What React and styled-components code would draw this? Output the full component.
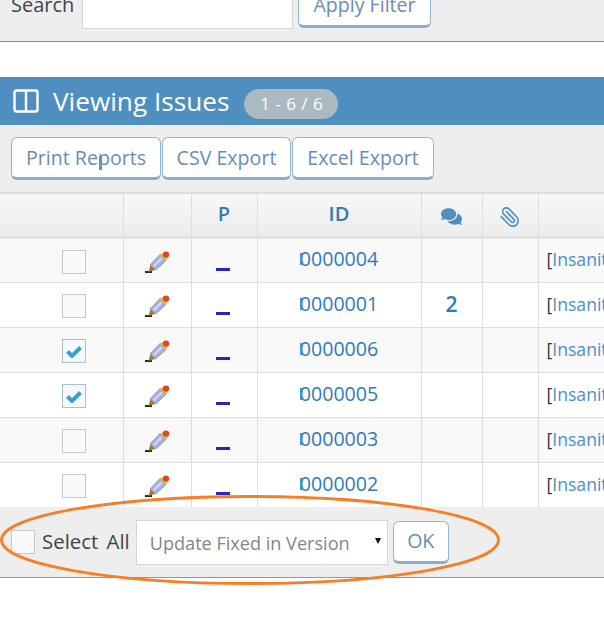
import React from 'react';
import styled, { createGlobalStyle } from 'styled-components';
import { FaComments } from 'react-icons/fa';
import { Paperclip } from 'lucide-react';

const Global = createGlobalStyle`
  html, body { margin: 0; padding: 0; background: #fff; overflow: hidden; }
  body { font-family: "Open Sans", "Liberation Sans", sans-serif; font-size: 19.6px; color: #393939; }
`;
const Page = styled.div`position: relative; width: 604px; height: 625px; overflow: hidden;`;
const FilterBar = styled.div`
  height: 41px; box-sizing: content-box; background: #eee; border-bottom: 1px solid #6f97b8;
  display: flex; align-items: flex-end; padding-left: 11px; overflow: hidden;
`;
const FilterLabel = styled.span`font-size: 20px; line-height: 28px; margin-bottom: 22px; width: 71px; flex: none; color: #444;`;
const SearchInput = styled.div`
  width: 211px; height: 44px; box-sizing: border-box; background: #fff; border: 1px solid #d5d5d5;
  margin-bottom: 12px; flex: none;
`;
const Button = styled.button`
  font-family: inherit; font-size: 19.6px; line-height: 28px; color: #6a8db0; background: #fff;
  border: 1px solid #94b6d4; border-bottom-width: 3px; border-bottom-color: #8aacce; border-radius: 6px;
  padding: 0; height: ${p => p.$h || 43}px; width: ${p => p.$w}px; box-sizing: border-box; flex: none; margin: 0;
`;
const FilterButton = styled(Button)`margin: 0 0 13px 5px;`;
const Stem = styled.span`
  position: relative;
  &::before { content: ""; position: absolute; left: 1px; top: 12px; width: 3px; height: 14px; background: #5f92bf; }
`;
const Spacer = styled.div`height: 35px;`;
const TitleBar = styled.div`
  height: 48px; background: #4f8fc0; color: #fff; display: flex; align-items: center; padding: 0 0 0 13px;
`;
const Title = styled.h4`font-weight: 400; font-size: 26.2px; line-height: 34px; margin: 0 15px 0 14px; letter-spacing: 0;`;
const Badge = styled.span`
  background: #abb9c3; color: #fff; font-size: 17px; line-height: 30px; height: 30px; width: 94px; border-radius: 15px;
  text-align: center; margin-top: 6px; word-spacing: 1px;
`;
const Toolbar = styled.div`height: 67px; box-sizing: border-box; background: #eee; display: flex; gap: 1px; padding: 12px 0 0 11px;`;
const Table = styled.table`
  border-collapse: collapse; table-layout: fixed; width: 800px; background: #fff;
`;
const TableWrap = styled.div`height: 315px; overflow: hidden;`;
const Head = styled.th`
  height: 44px; padding: 0 0 2px 0; box-sizing: border-box; font-weight: 600; font-size: 20px; color: #337ab7;
  background: linear-gradient(#f8f8f8, #ececec); border-left: 1px solid #ddd; border-right: 1px solid #ddd;
  border-top: 2px solid #ddd; border-bottom: 3px solid #e2e2e2; text-align: center; vertical-align: middle;
  &:first-child { border-left: 0; }
  svg { vertical-align: middle; transform: translateY(1px); }
`;
const Row = styled.tr`background: ${p => p.$odd ? '#f9f9f9' : '#fff'};`;
const Cell = styled.td`
  height: 45px; padding: 0; box-sizing: border-box; border: 1px solid #ddd; text-align: center; vertical-align: middle;
  color: #337ab7; font-size: 19.6px; line-height: 28px;
  &:first-child { border-left: 0; }
`;
const CheckCell = styled(Cell)`padding-left: 26px;`;
const IdCell = styled(Cell)`padding: 0 0 2px 0;`;
const IdText = styled.span`
  position: relative;
  &::before { content: ""; position: absolute; left: 0; top: 8px; width: 2px; height: 12px; background: #4a90d0; }
`;
const Count = styled(Cell)`font-weight: 600; font-size: 21px; padding-bottom: 2px;`;
const SummaryCell = styled(Cell)`text-align: left; padding: 0 0 2px 8px; font-size: 17.6px; white-space: nowrap; overflow: hidden; color: #333;`;
const SummaryLink = styled.span`color: #4d8fc6;`;
const Check = styled.span`
  display: inline-flex; align-items: center; justify-content: center; width: 24px; height: 24px; box-sizing: border-box; flex: none;
  border: 1px solid ${p => p.$on ? '#a9c0d0' : '#c8c8c8'}; background: ${p => p.$on ? '#f5f9fc' : '#fafafa'};
  vertical-align: middle;
`;
const PriorityMark = styled.span`display: block; width: 14px; height: 3px; background: #2626bb; margin: 0 auto; transform: translate(-1px, 9px);`;
const Footer = styled.div`
  height: 70px; box-sizing: content-box; background: #eee; border-bottom: 1px solid #6f9fc4; display: flex; align-items: center; padding-left: 11px;
`;
const FooterLabel = styled.span`font-size: 20.4px; line-height: 28px; color: #444; margin: 0 6px 0 7px; word-spacing: 3px; transform: translateY(-1px); white-space: nowrap;`;
const FakeSelect = styled.div`
  width: 252px; height: 45px; box-sizing: border-box; background: #fff; border: 1px solid #d5d5d5; color: #858585;
  font-size: 18.1px; display: flex; align-items: center; padding: 2px 0 0 13px; position: relative; margin-right: 5px; white-space: nowrap;
`;
const Arrow = styled.span`
  position: absolute; right: 6px; top: 17px; width: 0; height: 0;
  border-left: 3px solid transparent; border-right: 3px solid transparent; border-top: 6px solid #111;
`;
const Ellipse = styled.svg`position: absolute; left: 0; top: 490px; pointer-events: none;`;
const ClipIcon = styled(Paperclip)`color: #4f8fc0; && { transform: scaleX(-1) translateY(1px); }`;

const Pencil = () => (
  <svg width="26" height="24" viewBox="0 0 26 24" style={{ verticalAlign: 'middle' }}>
    <path d="M1 22h7" stroke="#111" strokeWidth="1.8" />
    <path d="M4.5 22 L6.5 14.5 L12 19.5 L8 21 Z" fill="#a5801e" />
    <path d="M6 15 L16 4.5 L22 10.5 L11.5 20 Z" fill="#aab0de" stroke="#7f85ba" strokeWidth=".8" />
    <path d="M9 15.5 L17 7.5 L18.5 9 L10.5 17 Z" fill="#d5d8f2" />
    <path d="M16 4.5 L22 10.5 L24 8 L19 3 Z" fill="#e8c020" />
    <circle cx="22" cy="4.6" r="3.2" fill="#e0452c" />
  </svg>
);
const CheckMark = () => (
  <svg width="16" height="13" viewBox="0 0 16 13"><path d="M1.5 6.5 L6 11 L14.5 2.5" fill="none" stroke="#3aa0d2" strokeWidth="4" /></svg>
);
const ColumnsIcon = () => (
  <svg width="26" height="24" viewBox="0 0 26 24"><path d="M1.5 3.5a2 2 0 0 1 2-2h19a2 2 0 0 1 2 2v17a2 2 0 0 1-2 2h-19a2 2 0 0 1-2-2zM13 2v20" fill="none" stroke="#fff" strokeWidth="2.4" /></svg>
);

const rows = [
  ['0000004', '', false], ['0000001', '2', false], ['0000006', '', true],
  ['0000005', '', true], ['0000003', '', false], ['0000002', '', false],
];

export default function App() {
  return (
    <Page>
      <Global />
      <FilterBar>
        <FilterLabel>Search</FilterLabel>
        <SearchInput />
        <FilterButton $w={133} $h={44}>Apply Filter</FilterButton>
      </FilterBar>
      <Spacer />
      <TitleBar>
        <ColumnsIcon />
        <Title>Viewing Issues</Title>
        <Badge>1 - 6 / 6</Badge>
      </TitleBar>
      <Toolbar>
        <Button $w={150}>Print Re<Stem>p</Stem>orts</Button>
        <Button $w={129}>CSV Export</Button>
        <Button $w={142}>Excel Export</Button>
      </Toolbar>
      <TableWrap>
        <Table>
          <colgroup>
            <col width="123" /><col width="68" /><col width="66" /><col width="164" /><col width="61" /><col width="56" /><col width="262" />
          </colgroup>
          <thead>
            <tr>
              <Head />
              <Head />
              <Head>P</Head>
              <Head>ID</Head>
              <Head><FaComments size={21} color="#4f8fc0" /></Head>
              <Head><ClipIcon size={22} strokeWidth={1.8} /></Head>
              <Head />
            </tr>
          </thead>
          <tbody>
            {rows.map(([id, n, on], i) => (
              <Row key={id} $odd={i % 2 === 0}>
                <CheckCell><Check $on={on}>{on && <CheckMark />}</Check></CheckCell>
                <Cell><Pencil /></Cell>
                <Cell><PriorityMark /></Cell>
                <IdCell><IdText>{id}</IdText></IdCell>
                <Count>{n}</Count>
                <Cell />
                <SummaryCell>[<SummaryLink>Insanity</SummaryLink>]</SummaryCell>
              </Row>
            ))}
          </tbody>
        </Table>
      </TableWrap>
      <Footer>
        <Check />
        <FooterLabel>Select All</FooterLabel>
        <FakeSelect>Update Fixed in Version<Arrow /></FakeSelect>
        <Button $w={56}>OK</Button>
      </Footer>
      <Ellipse width="604" height="100" viewBox="0 490 604 100">
        <ellipse cx="250" cy="540" rx="248.5" ry="43.5" fill="none" stroke="#f97d24" strokeWidth="2.8" />
      </Ellipse>
    </Page>
  );
}
